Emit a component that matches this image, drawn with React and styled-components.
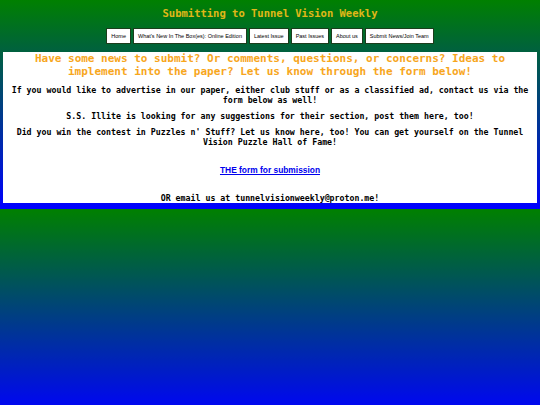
import React from 'react';
import styled, { createGlobalStyle } from 'styled-components';

const GlobalStyle = createGlobalStyle`
  body {
    margin: 0;
    background: linear-gradient(#008000, #0000ff);
    font-family: "DejaVu Sans Mono", monospace;
  }
`;

const navItems = [
  'Home',
  "What's New In The Box(es): Online Edition",
  'Latest Issue',
  'Past Issues',
  'About us',
  'Submit News/Join Team',
];

const Title = styled.h1`
  margin: 0;
  padding-top: 6px;
  font-size: 10.5px;
  line-height: 14px;
  font-weight: bold;
  text-align: center;
  color: #e0b818;
`;

const Nav = styled.nav`
  display: flex;
  justify-content: center;
  gap: 2px;
  margin-top: 8px;
`;

const NavButton = styled.a`
  display: flex;
  align-items: center;
  height: 16px;
  box-sizing: border-box;
  padding: 0 4px;
  background: #ffffff;
  border: 1px solid #1c3d1c;
  font-family: "Liberation Sans", Arial, sans-serif;
  font-size: 5.5px;
  color: #000000;
  text-decoration: none;
  white-space: nowrap;
`;

const Panel = styled.main`
  margin: 8px 3px 6px;
  padding: 0 8px;
  background: #ffffff;
  text-align: center;
`;

const Heading = styled.h2`
  margin: 0;
  font-size: 11px;
  line-height: 13px;
  font-weight: bold;
  color: #f7a61c;
`;

const Text = styled.p`
  margin: ${({ $gap }) => $gap}px 0 0;
  font-size: 8.25px;
  line-height: 10px;
  font-weight: bold;
  color: #000000;
`;

const FormLink = styled.a`
  display: block;
  margin-top: 18px;
  font-family: "Liberation Sans", Arial, sans-serif;
  font-size: 8.4px;
  line-height: 10px;
  font-weight: bold;
  color: #0000ee;
  text-decoration: underline;
`;

export default function App() {
  return (
    <>
      <GlobalStyle />
      <Title>Submitting to Tunnel Vision Weekly</Title>
      <Nav>
        {navItems.map((item) => (
          <NavButton key={item} href="#">{item}</NavButton>
        ))}
      </Nav>
      <Panel>
        <Heading>
          Have some news to submit? Or comments, questions, or concerns? Ideas to
          implement into the paper? Let us know through the form below!
        </Heading>
        <Text $gap={7}>
          If you would like to advertise in our paper, either club stuff or as a
          classified ad, contact us via the form below as well!
        </Text>
        <Text $gap={6}>
          S.S. Illite is looking for any suggestions for their section, post them here, too!
        </Text>
        <Text $gap={6}>
          Did you win the contest in Puzzles n' Stuff? Let us know here, too! You can
          get yourself on the Tunnel Vision Puzzle Hall of Fame!
        </Text>
        <FormLink href="#">THE form for submission</FormLink>
        <Text $gap={18}>OR email us at tunnelvisionweekly@proton.me!</Text>
      </Panel>
    </>
  );
}
